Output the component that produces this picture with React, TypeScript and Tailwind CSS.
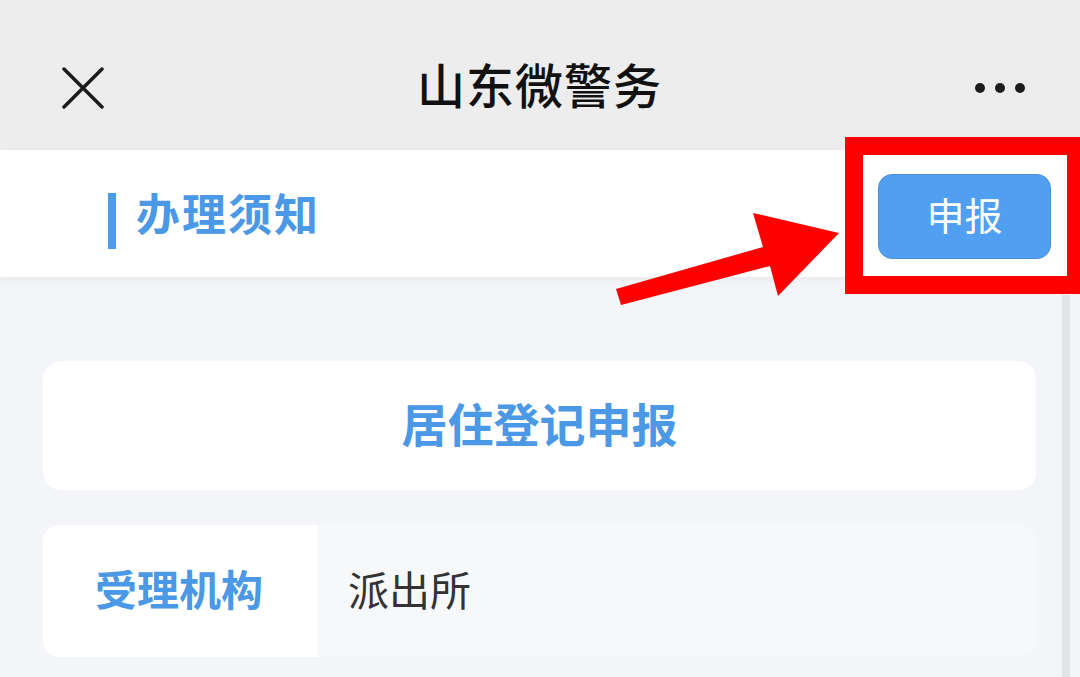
const cjk = { fontFamily: '"Noto Sans CJK SC", "Noto Sans", sans-serif' }

function TopBar() {
  return (
    <div className="h-[150px] shrink-0 bg-[#ededed] px-[62px] pt-[36px]">
      <div className="flex h-[96px] items-center justify-between">
        <svg width={42} height={42} viewBox="0 0 42 42" className="mt-[8px]">
          <path d="M2 2 L40 40 M40 2 L2 40" stroke="#1c1c1c" strokeWidth={3.5} strokeLinecap="round" />
        </svg>
        <h1 className="-mt-[2px] text-[48px] font-medium leading-none text-[#111] tracking-[1px]">山东微警务</h1>
        <div className="mt-[8px] flex w-[50px] -mr-[7px] items-center justify-between">
          <span className="h-[10px] w-[10px] rounded-full bg-[#1c1c1c]" />
          <span className="h-[10px] w-[10px] rounded-full bg-[#1c1c1c]" />
          <span className="h-[10px] w-[10px] rounded-full bg-[#1c1c1c]" />
        </div>
      </div>
    </div>
  )
}

function NoticeHeader() {
  return (
    <div className="relative z-10 flex h-[127px] shrink-0 items-center justify-between bg-white pl-[108px] pr-[29px] shadow-[0_2px_6px_rgba(0,0,0,0.06)]">
      <div className="flex items-center gap-[20px] pt-[14px]">
        <span className="h-[56px] w-[8px] bg-[#4b9be9]" />
        <span className="-mt-[18px] text-[44px] font-bold leading-none tracking-[2px] text-[#4a98e6]">办理须知</span>
      </div>
      <button className="mt-[6px] flex h-[85px] w-[173px] items-center justify-center rounded-[14px] border border-[#4a90d9] bg-[#519ff0] pb-[6px] text-[38px] leading-none text-white">
        申报
      </button>
    </div>
  )
}

function Content() {
  return (
    <div className="relative flex-1 bg-[#f4f5f8] pl-[43px] pr-[44px] pt-[84px]">
      <div className="flex h-[129px] items-center justify-center rounded-[18px] bg-white pb-[8px]">
        <span className="text-[46px] font-bold leading-none text-[#4a98e6]">居住登记申报</span>
      </div>
      <div className="mt-[35px] flex h-[132px] rounded-[16px] bg-[#f7f8fa]">
        <div className="flex w-[275px] items-center rounded-l-[16px] bg-white pb-[6px] pl-[52px]">
          <span className="text-[42px] font-bold leading-none text-[#4a98e6]">受理机构</span>
        </div>
        <div className="flex items-center pb-[6px] pl-[30px]">
          <span className="text-[41px] leading-none text-[#333]">派出所</span>
        </div>
      </div>
      {/* scrollbar */}
      <div className="absolute right-[10px] top-[18px] bottom-0 w-[8px] bg-[#e3e4e7]" />
    </div>
  )
}

function Annotation() {
  return (
    <div className="pointer-events-none absolute inset-0 z-20">
      <div className="absolute left-[845px] top-[137px] h-[157px] w-[240px] border-[18px] border-[#fe0000]" />
      <svg className="absolute inset-0" width={1080} height={677} viewBox="0 0 1080 677">
        <polygon
          fill="#fe0000"
          points="616,289 763,247 753,213 839,233 778,296 770,266 621,305"
        />
      </svg>
    </div>
  )
}

export default function App() {
  return (
    <div className="relative flex h-[677px] w-[1080px] flex-col overflow-hidden bg-[#f4f5f8]" style={cjk}>
      <TopBar />
      <NoticeHeader />
      <Content />
      <Annotation />
    </div>
  )
}
